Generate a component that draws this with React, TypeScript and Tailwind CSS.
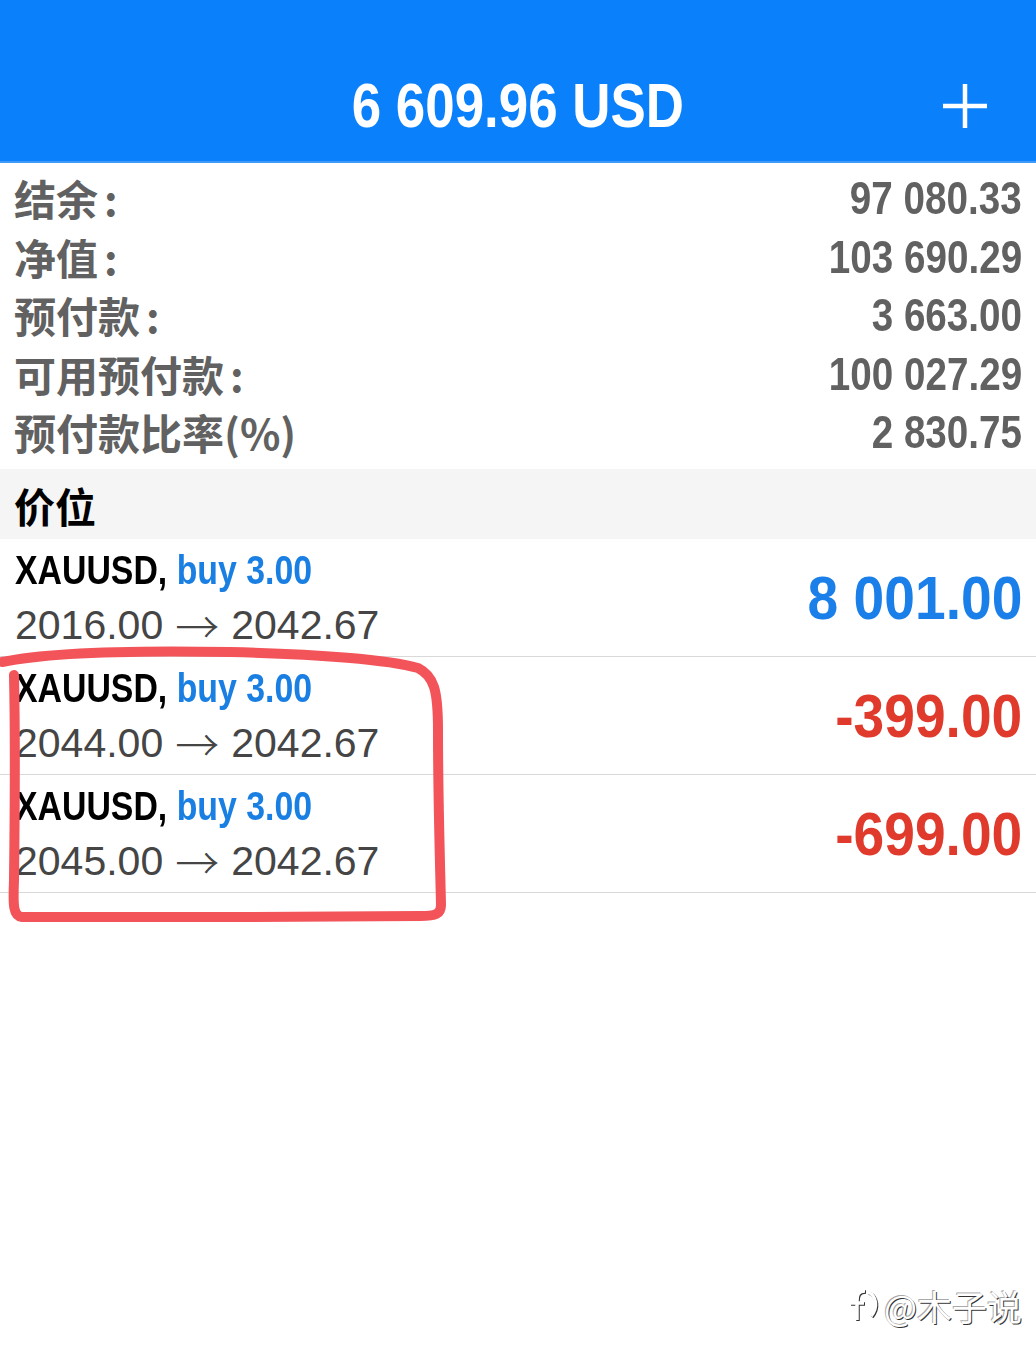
import React from 'react';

// no condensed face installed: squeeze Liberation Sans Bold instead
const narrow = "font-['Liberation_Sans',Arial,sans-serif] font-bold inline-block";
const cjk = "font-['Noto_Sans_CJK_SC','Noto_Sans',sans-serif]";

const summary = [
  { label: '结余', colon: true, value: '97 080.33' },
  { label: '净值', colon: true, value: '103 690.29' },
  { label: '预付款', colon: true, value: '3 663.00' },
  { label: '可用预付款', colon: true, value: '100 027.29' },
  { label: '预付款比率(%)', colon: false, value: '2 830.75' },
];

interface Position {
  symbol: string;
  side: string;
  open: string;
  current: string;
  profit: string;
  positive: boolean;
}

const positions: Position[] = [
  { symbol: 'XAUUSD', side: 'buy 3.00', open: '2016.00', current: '2042.67', profit: '8 001.00', positive: true },
  { symbol: 'XAUUSD', side: 'buy 3.00', open: '2044.00', current: '2042.67', profit: '-399.00', positive: false },
  { symbol: 'XAUUSD', side: 'buy 3.00', open: '2045.00', current: '2042.67', profit: '-699.00', positive: false },
];

function PositionRow({ p }: { p: Position }) {
  return (
    <div className="flex h-[118px] items-center justify-between border-b border-[#d9d9d9] pl-[15px] pr-[14px]">
      <div className="flex h-full flex-col pt-[4px]">
        <div className="h-[55px]">
          <span className={`${narrow} origin-left scale-x-[0.825] whitespace-nowrap text-[41px] leading-[55px] text-black`}>
            {p.symbol}, <span className="text-[#1a7fe2]">{p.side}</span>
          </span>
        </div>
        <div className="flex items-center whitespace-nowrap font-['Liberation_Sans',Arial,sans-serif] text-[41px] leading-[55px] text-[#454545]">
          {p.open}
          <span className="mx-[12px] font-['Noto_Sans_CJK_SC',sans-serif] text-[44px] font-light leading-none">→</span>
          {p.current}
        </div>
      </div>
      <span
        className={`${narrow} origin-right scale-x-[0.89] pt-[2px] text-[62px] leading-none ${
          p.positive ? 'text-[#1a7fe8]' : 'text-[#e03a2c]'
        }`}
      >
        {p.profit}
      </span>
    </div>
  );
}

export default function App() {
  return (
    <div className="relative min-h-[1366px] w-full overflow-hidden bg-white">
      {/* header */}
      <div className="grid h-[163px] grid-cols-[1fr_auto_1fr] items-center border-b-2 border-[#3f9af9] bg-[#0a80fb] pt-[50px]">
        <div />
        <span className={`${narrow} origin-center scale-x-[0.84] text-[63px] leading-none text-white`}>6 609.96 USD</span>
        <div className="flex justify-end pr-[47px]">
          <svg width="48" height="48" viewBox="0 0 48 48" className="text-white">
            <path d="M24 2v44M2 24h44" stroke="currentColor" strokeWidth="4.5" />
          </svg>
        </div>
      </div>

      {/* account summary */}
      <div className="pb-[7px] pt-[6px]">
        {summary.map((row) => (
          <div key={row.label} className="flex h-[58.5px] items-center justify-between pl-[14px] pr-[14px]">
            <span className={`${cjk} text-[42px] font-bold leading-none text-[#616161]`}>
              {row.label}
              {row.colon && <span className="ml-[6px]">:</span>}
            </span>
            <span className={`${narrow} origin-right scale-x-[0.84] text-[46px] leading-none text-[#616161]`}>{row.value}</span>
          </div>
        ))}
      </div>

      {/* positions */}
      <div className="flex h-[70px] items-center bg-[#f5f5f5] pl-[14px] pt-[4px]">
        <span className={`${cjk} text-[41px] font-bold leading-none text-black`}>价位</span>
      </div>
      <div>
        {positions.map((p, i) => (
          <PositionRow key={i} p={p} />
        ))}
      </div>

      {/* hand-drawn annotation */}
      <svg className="pointer-events-none absolute left-0 top-0" width="1036" height="1366" viewBox="0 0 1036 1366">
        <path
          d="M2 662 C40 654 120 650 230 652 C320 654 390 660 418 668 C434 676 438 690 438 730 C438 800 440 860 441 905 C441 914 436 916 420 916 C300 917 120 918 22 917 C13 916 13 905 14 880 C15 800 15 720 14 675"
          fill="none"
          stroke="#f2545a"
          strokeWidth="10"
          strokeLinecap="round"
          strokeLinejoin="round"
        />
      </svg>

      {/* watermark */}
      <div className="absolute bottom-[40px] right-[14px] flex items-center gap-[4px]">
        <svg width="34" height="42" viewBox="0 0 34 42" style={{ filter: 'drop-shadow(1px 1px 0 #333)' }}>
          <path
            d="M19 7 C12 7 11 11 11 17 L11 36 M4 19 L18 19 M22 8 C31 12 32 24 25 32"
            fill="none"
            stroke="#fff"
            strokeWidth="3.5"
          />
        </svg>
        <span className={`${cjk} text-[35px] leading-none text-white [text-shadow:1px_1px_0_#333,-1px_-1px_0_#aaa]`}>
          @木子说
        </span>
      </div>
    </div>
  );
}
